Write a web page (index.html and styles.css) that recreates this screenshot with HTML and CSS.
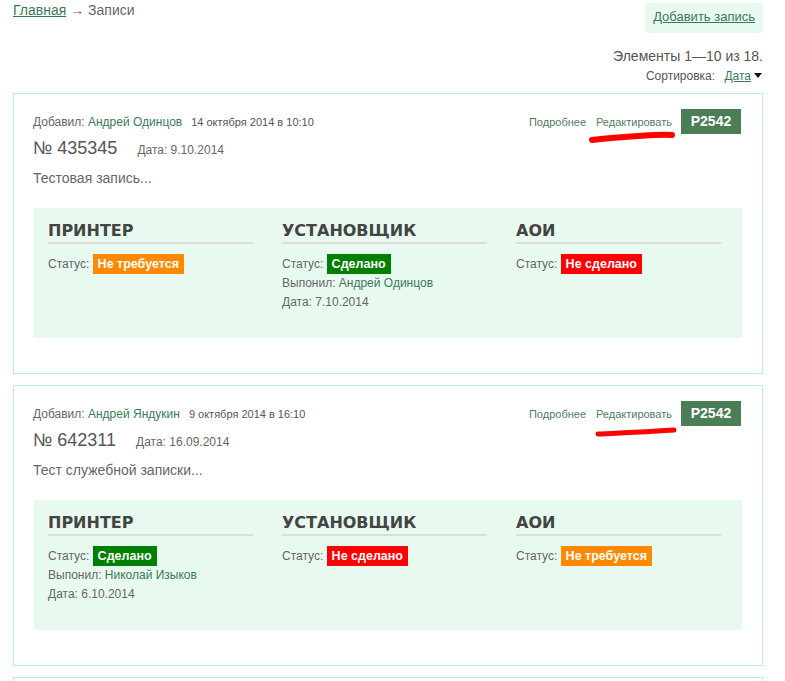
FILE: index.html
```html
<!DOCTYPE html>
<html lang="ru">
<head>
<meta charset="utf-8">
<title>Записи</title>
<link rel="stylesheet" href="styles.css">
</head>
<body>
<div class="page">
  <div class="topbar">
    <div class="crumbs"><a href="#" class="link">Главная</a> → Записи</div>
    <a href="#" class="add-btn">Добавить запись</a>
  </div>
  <div class="meta">
    <div class="count">Элементы 1—10 из 18.</div>
    <div class="sort">Сортировка: <a href="#" class="link">Дата</a><span class="caret"></span></div>
  </div>

  <div class="card">
    <div class="card-head">
      <div class="author">Добавил: <a href="#" class="name">Андрей Одинцов</a><span class="stamp">14 октября 2014 в 10:10</span></div>
      <div class="actions">
        <a href="#" class="act">Подробнее</a>
        <a href="#" class="act edit">Редактировать<svg class="scribble" width="90" height="14" viewBox="0 0 90 14"><path d="M4 10 C 20 8, 35 7, 50 6 C 65 5, 78 4, 84 5" stroke="#ff0000" stroke-width="6" fill="none" stroke-linecap="round"/></svg></a>
        <span class="code">P2542</span>
      </div>
    </div>
    <div class="num-row"><span class="num">№ 435345</span><span class="date">Дата: 9.10.2014</span></div>
    <div class="desc">Тестовая запись...</div>
    <div class="panel">
      <div class="col">
        <div class="col-title">ПРИНТЕР</div>
        <div class="line">Статус: <span class="badge orange">Не требуется</span></div>
      </div>
      <div class="col">
        <div class="col-title">УСТАНОВЩИК</div>
        <div class="line">Статус: <span class="badge green">Сделано</span></div>
        <div class="line">Выпонил: <span class="name">Андрей Одинцов</span></div>
        <div class="line">Дата: 7.10.2014</div>
      </div>
      <div class="col">
        <div class="col-title">АОИ</div>
        <div class="line">Статус: <span class="badge red">Не сделано</span></div>
      </div>
    </div>
  </div>

  <div class="card">
    <div class="card-head">
      <div class="author">Добавил: <a href="#" class="name">Андрей Яндукин</a><span class="stamp">9 октября 2014 в 16:10</span></div>
      <div class="actions">
        <a href="#" class="act">Подробнее</a>
        <a href="#" class="act edit">Редактировать<svg class="scribble flat" width="90" height="14" viewBox="0 0 90 14"><path d="M4 9 C 25 8, 50 7, 80 5" stroke="#ff0000" stroke-width="5" fill="none" stroke-linecap="round"/></svg></a>
        <span class="code">P2542</span>
      </div>
    </div>
    <div class="num-row"><span class="num">№ 642311</span><span class="date">Дата: 16.09.2014</span></div>
    <div class="desc">Тест служебной записки...</div>
    <div class="panel">
      <div class="col">
        <div class="col-title">ПРИНТЕР</div>
        <div class="line">Статус: <span class="badge green">Сделано</span></div>
        <div class="line">Выпонил: <span class="name">Николай Изыков</span></div>
        <div class="line">Дата: 6.10.2014</div>
      </div>
      <div class="col">
        <div class="col-title">УСТАНОВЩИК</div>
        <div class="line">Статус: <span class="badge red">Не сделано</span></div>
      </div>
      <div class="col">
        <div class="col-title">АОИ</div>
        <div class="line">Статус: <span class="badge orange">Не требуется</span></div>
      </div>
    </div>
  </div>

  <div class="card"></div>
</div>
</body>
</html>
```
FILE: styles.css
```css
* { box-sizing: border-box; }
html, body { margin: 0; padding: 0; background: #fff; }
body {
  font-family: "Liberation Sans", Arial, sans-serif;
  color: #666;
  font-size: 12px;
}
.page {
  padding: 3px 22px 0 13px;
}
.link { color: #3b7a57; text-decoration: underline; }
.topbar {
  display: flex;
  justify-content: space-between;
  align-items: flex-start;
}
.crumbs { font-size: 14px; line-height: 15px; color: #666; }
.add-btn {
  display: block;
  height: 30px;
  line-height: 28px;
  padding: 0 8px;
  background: #e8f9ef;
  color: #3b7a57;
  font-size: 13px;
  text-decoration: underline;
}
.meta {
  text-align: right;
  margin-top: 14px;
}
.count { font-size: 14px; line-height: 18px; color: #555; }
.sort { font-size: 12px; line-height: 18px; margin-top: 2px; color: #555; padding-right: 1px; }
.sort .link { margin-left: 6px; }
.caret {
  display: inline-block;
  width: 0; height: 0;
  border-left: 4px solid transparent;
  border-right: 4px solid transparent;
  border-top: 5px solid #111;
  margin-left: 3px;
  vertical-align: 2px;
}
.card {
  border: 1px solid #bdeed3;
  padding: 15px 20px 35px 19px;
  margin-top: 11px;
}
.meta + .card { margin-top: 8px; }
.card:last-child { min-height: 20px; }
.card-head {
  display: flex;
  justify-content: space-between;
  align-items: center;
  height: 25px;
  padding-right: 1px;
}
.author { font-size: 12px; color: #666; }
.name { color: #3b7a57; text-decoration: none; }
.stamp { font-size: 11px; color: #555; margin-left: 9px; }
.actions { display: flex; align-items: center; }
.act {
  font-size: 11px;
  color: #4e7d60;
  text-decoration: none;
  margin-right: 10px;
  position: relative;
}
.edit { margin-right: 9px; }
.scribble {
  position: absolute;
  left: -8px;
  top: 14px;
}
.scribble.flat { top: 17px; left: -2px; }
.code {
  display: block;
  width: 60px;
  height: 25px;
  line-height: 25px;
  text-align: center;
  background: #4b7d57;
  color: #fff;
  font-weight: bold;
  font-size: 14px;
}
.num-row { margin-top: 3px; line-height: 22px; display: flex; align-items: baseline; }
.num { font-size: 18px; color: #555; }
.date { font-size: 12px; color: #666; margin-left: 20px; }
.desc { font-size: 14px; color: #666; margin-top: 8px; line-height: 18px; }
.panel {
  margin-top: 21px;
  margin-left: 1px;
  background: #e8f9f0;
  height: 130px;
  padding: 13px 0 0 14px;
  display: grid;
  grid-template-columns: 205px 205px 205px;
  column-gap: 29px;
  align-content: start;
}
.col-title {
  font-family: "DejaVu Sans", sans-serif;
  font-weight: bold;
  font-size: 16px;
  line-height: 20px;
  color: #444;
  padding-bottom: 1px;
  border-bottom: 2px solid #dcdcdc;
  margin-bottom: 10px;
}
.line { font-size: 12px; line-height: 19px; color: #666; }
.badge {
  display: inline-block;
  height: 20px;
  line-height: 20px;
  padding: 0 5px;
  color: #fff;
  font-weight: bold;
  font-size: 12.5px;
  margin-left: 0;
}
.orange { background: #ff8a00; }
.green { background: #008000; }
.red { background: #ff0000; }
```
